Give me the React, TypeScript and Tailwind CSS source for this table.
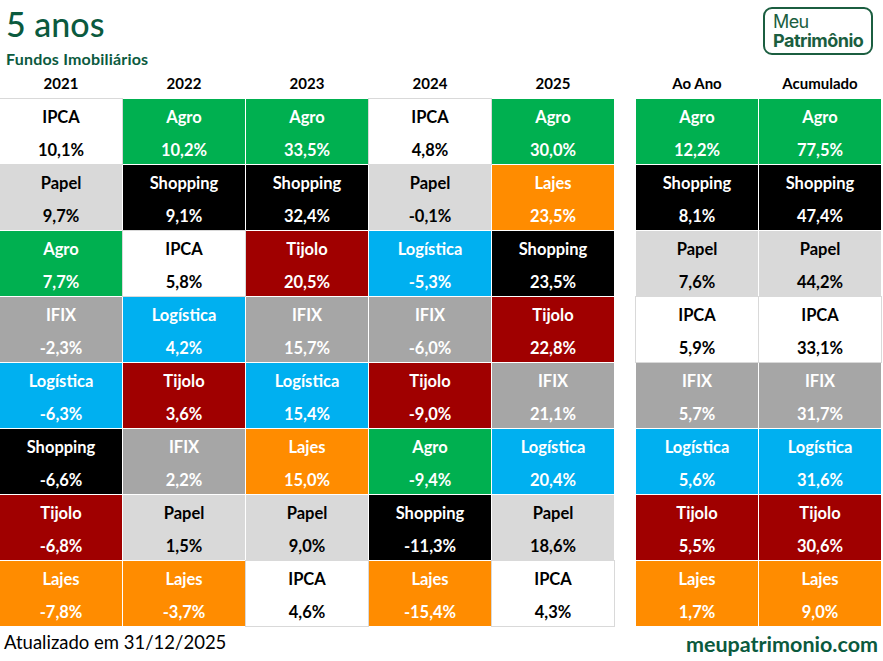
import React from "react";

type Cat = "Agro" | "Shopping" | "Tijolo" | "Logística" | "IFIX" | "Papel" | "Lajes" | "IPCA";

const catStyle: Record<Cat, string> = {
  Agro: "bg-[#00b050] text-white",
  Shopping: "bg-black text-white",
  Tijolo: "bg-[#a00000] text-white",
  Logística: "bg-[#00b0f0] text-white",
  IFIX: "bg-[#a6a6a6] text-white",
  Papel: "bg-[#d9d9d9] text-black",
  Lajes: "bg-[#ff8c00] text-white",
  IPCA: "bg-white text-black outline outline-1 outline-[#d9d9d9]",
};

type Entry = [Cat, string];

const years: { label: string; rows: Entry[] }[] = [
  {
    label: "2021",
    rows: [
      ["IPCA", "10,1%"],
      ["Papel", "9,7%"],
      ["Agro", "7,7%"],
      ["IFIX", "-2,3%"],
      ["Logística", "-6,3%"],
      ["Shopping", "-6,6%"],
      ["Tijolo", "-6,8%"],
      ["Lajes", "-7,8%"],
    ],
  },
  {
    label: "2022",
    rows: [
      ["Agro", "10,2%"],
      ["Shopping", "9,1%"],
      ["IPCA", "5,8%"],
      ["Logística", "4,2%"],
      ["Tijolo", "3,6%"],
      ["IFIX", "2,2%"],
      ["Papel", "1,5%"],
      ["Lajes", "-3,7%"],
    ],
  },
  {
    label: "2023",
    rows: [
      ["Agro", "33,5%"],
      ["Shopping", "32,4%"],
      ["Tijolo", "20,5%"],
      ["IFIX", "15,7%"],
      ["Logística", "15,4%"],
      ["Lajes", "15,0%"],
      ["Papel", "9,0%"],
      ["IPCA", "4,6%"],
    ],
  },
  {
    label: "2024",
    rows: [
      ["IPCA", "4,8%"],
      ["Papel", "-0,1%"],
      ["Logística", "-5,3%"],
      ["IFIX", "-6,0%"],
      ["Tijolo", "-9,0%"],
      ["Agro", "-9,4%"],
      ["Shopping", "-11,3%"],
      ["Lajes", "-15,4%"],
    ],
  },
  {
    label: "2025",
    rows: [
      ["Agro", "30,0%"],
      ["Lajes", "23,5%"],
      ["Shopping", "23,5%"],
      ["Tijolo", "22,8%"],
      ["IFIX", "21,1%"],
      ["Logística", "20,4%"],
      ["Papel", "18,6%"],
      ["IPCA", "4,3%"],
    ],
  },
];

const totals: { label: string; rows: Entry[] }[] = [
  {
    label: "Ao Ano",
    rows: [
      ["Agro", "12,2%"],
      ["Shopping", "8,1%"],
      ["Papel", "7,6%"],
      ["IPCA", "5,9%"],
      ["IFIX", "5,7%"],
      ["Logística", "5,6%"],
      ["Tijolo", "5,5%"],
      ["Lajes", "1,7%"],
    ],
  },
  {
    label: "Acumulado",
    rows: [
      ["Agro", "77,5%"],
      ["Shopping", "47,4%"],
      ["Papel", "44,2%"],
      ["IPCA", "33,1%"],
      ["IFIX", "31,7%"],
      ["Logística", "31,6%"],
      ["Tijolo", "30,6%"],
      ["Lajes", "9,0%"],
    ],
  },
];

function Cell({ cat, value }: { cat: Cat; value: string }) {
  return (
    <div className={`flex h-[65px] w-[122px] flex-col items-center pt-[2px] text-[16.5px] font-bold leading-[32px] ${catStyle[cat]}`}>
      <span>{cat}</span>
      <span className="mt-[1px]">{value}</span>
    </div>
  );
}

function Block({ cols }: { cols: { label: string; rows: Entry[] }[] }) {
  return (
    <div className="flex flex-col">
      <div className="flex h-[29px] gap-px">
        {cols.map((c) => (
          <div key={c.label} className="flex w-[122px] items-center justify-center pb-[2px] text-[15px] font-bold text-black">
            {c.label}
          </div>
        ))}
      </div>
      <div className="grid grid-flow-col grid-rows-8 gap-px">
        {cols.map((c) => c.rows.map(([cat, v], i) => <Cell key={c.label + i} cat={cat} value={v} />))}
      </div>
    </div>
  );
}

export default function App() {
  return (
    <div className="relative h-[661px] w-[883px] overflow-hidden bg-white font-['Lato',sans-serif]">
      <div className="flex h-[70px] items-start justify-between">
        <div className="flex flex-col pl-[6px]">
          <h1 className="mt-[4px] text-[34px] leading-[40px] font-medium text-[#0b5a3e]">5 anos</h1>
          <p className="mt-[6px] text-[16px] leading-[18px] font-bold tracking-[0.2px] text-[#0b5a3e]">Fundos Imobiliários</p>
        </div>
        <div className="mr-[10px] mt-[7px] flex h-[48px] w-[110px] flex-col justify-center rounded-[9px] border-2 border-[#1b5e40] pl-[8px] font-['Inter',sans-serif] text-[#1b5e40]">
          <span className="text-[18px] leading-[19px] font-normal tracking-[-0.6px]">Meu</span>
          <span className="text-[18px] leading-[19px] font-bold tracking-[-0.5px]">Patrimônio</span>
        </div>
      </div>
      <div className="flex">
        <Block cols={years} />
        <div className="ml-[22px]">
          <Block cols={totals} />
        </div>
      </div>
      <div className="flex h-[34px] items-center justify-between pl-[4px] pr-[5px]">
        <span className="text-[18.5px] font-normal text-black">Atualizado em 31/12/2025</span>
        <span className="mt-[3px] text-[21.5px] font-bold text-[#0b5a3e]">meupatrimonio.com</span>
      </div>
    </div>
  );
}
